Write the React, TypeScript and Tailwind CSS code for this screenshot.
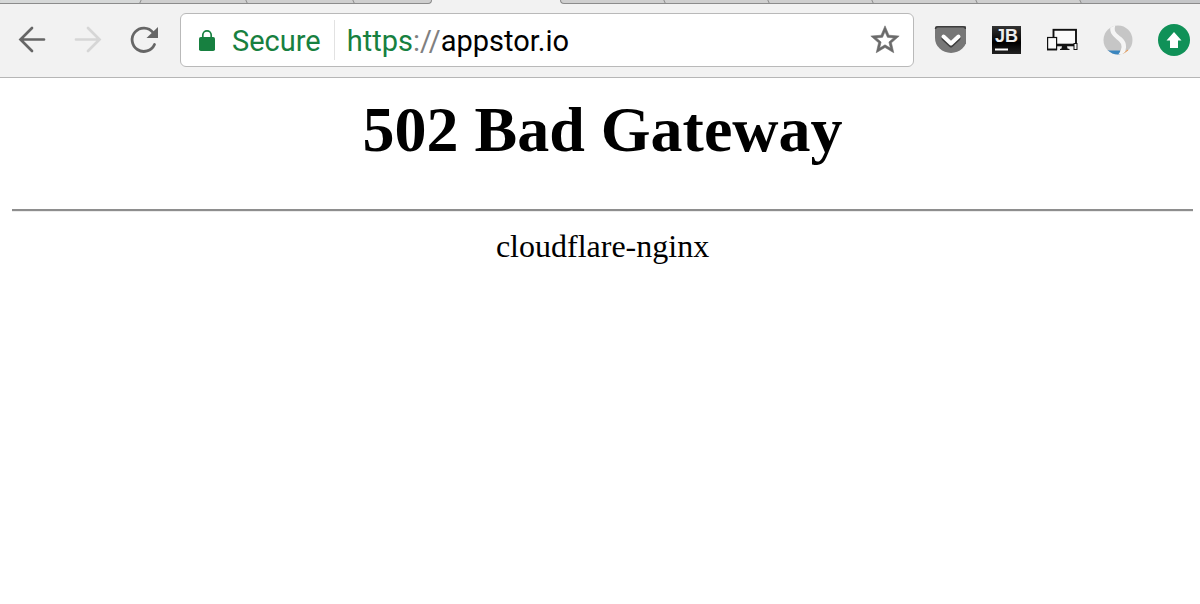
import type { ReactNode } from "react";

function ToolButton({ label, disabled, children }: { label: string; disabled?: boolean; children: ReactNode }) {
  return (
    <button type="button" aria-label={label} disabled={disabled} className="size-8 shrink-0">
      <svg viewBox="0 0 32 32" className="size-8" fill="none">
        {children}
      </svg>
    </button>
  );
}

function TabStrip() {
  return (
    <div className="flex h-1 bg-[#f2f2f2]">
      {/* Tabs left of the active one */}
      <div className="flex w-[36%] overflow-hidden rounded-br-md border-r border-b border-[#8c8c8c] bg-[#cfcfcf]">
        <div className="w-[141px] -skew-x-[24deg] border-r border-[#8c8c8c] bg-[#d6d8d8]" />
        <div className="w-[106px] skew-x-[24deg] border-r border-[#8c8c8c]" />
        <div className="w-[107px] skew-x-[24deg] border-r border-[#8c8c8c]" />
      </div>
      {/* Tabs right of the active one */}
      <div className="ml-32 flex flex-1 overflow-hidden rounded-bl-md border-b border-l border-[#8c8c8c] bg-[#cfcfcf]">
        {Array.from({ length: 5 }).map((_, i) => (
          <div key={i} className="w-[104px] skew-x-[24deg] border-r border-[#8c8c8c]" />
        ))}
        <div className="flex-1 bg-[#c5c6c8]" />
      </div>
    </div>
  );
}

function AddressBar() {
  return (
    <div className="mx-5 flex h-[54px] min-w-0 flex-1 items-center rounded-md border border-[#b9b9b9] bg-white text-[29px] leading-8 text-[#178040]">
      <button type="button" className="flex h-10 items-center border-r border-[#e2e2e2] pr-[13px] pl-[17px]">
        <svg viewBox="0 0 18 22" className="mr-4 h-[22px] w-[18px]" aria-hidden="true">
          <path d="M4.800 9.500V6a4.200 4.200 0 0 1 8.400 0v3.500" fill="none" stroke="#178040" strokeWidth="1.700" />
          <rect x="1" y="8" width="16" height="14" rx="1.800" fill="#178040" />
        </svg>
        <span className="pt-0.5">Secure</span>
      </button>
      <div
        role="textbox"
        aria-label="Address"
        contentEditable
        suppressContentEditableWarning
        spellCheck={false}
        className="ml-3 flex-1 pt-0.5 whitespace-nowrap text-black outline-none"
      >
        <span className="text-[#178040]">https</span>
        <span className="text-[#808080]">://</span>appstor.io
      </div>
      <button type="button" aria-label="Bookmark this page" className="mr-[11px]">
        <svg viewBox="0 0 24 24" className="size-[34px]" fill="#6a6a6a" stroke="#6a6a6a" strokeWidth="0.400">
          <path d="M22 9.240l-7.190-.620L12 2 9.190 8.630 2 9.240l5.460 4.730L5.820 21 12 17.270 18.180 21l-1.630-7.030L22 9.240zM12 15.400l-3.760 2.270 1-4.280-3.320-2.880 4.380-.380L12 6.100l1.710 4.040 4.380.380-3.320 2.880 1 4.280L12 15.400z" />
        </svg>
      </button>
    </div>
  );
}

function Extensions() {
  return (
    <div className="flex items-center gap-6">
      <ToolButton label="Save to Pocket">
        <path d="M3 2h28a2 2 0 0 1 2 2v10a16 15 0 0 1-32 0V4a2 2 0 0 1 2-2z" fill="#777" />
        <path d="M1.500 5c0-1.600.800-2.300 2.500-2.300h25c1.700 0 2.500.700 2.500 2.300" stroke="#3d3d3d" strokeWidth="1.500" />
        <path d="M9.500 14.500l7.500 7 7.500-7" stroke="#3d3d3d" strokeWidth="4" strokeLinecap="round" strokeLinejoin="round" />
        <path d="M9.500 12.500l7.500 7 7.500-7" stroke="#fff" strokeWidth="4" strokeLinecap="round" strokeLinejoin="round" />
      </ToolButton>
      <ToolButton label="JetBrains IDE Support">
        <defs>
          <linearGradient id="jb" x1="0" y1="0" x2="0" y2="1">
            <stop offset="0" stopColor="#333" />
            <stop offset="0.600" stopColor="#000" />
            <stop offset="1" stopColor="#222" />
          </linearGradient>
        </defs>
        <rect x="2" y="2" width="29" height="28" fill="url(#jb)" />
        <text x="16.500" y="17.500" textAnchor="middle" fill="#eee" className="font-['Liberation_Sans',sans-serif] text-[18px] font-bold">
          JB
        </text>
        <path d="M5 25.500h13" stroke="#fff" strokeWidth="2" />
      </ToolButton>
      <ToolButton label="Responsive viewer">
        <rect x="7.500" y="5.800" width="22.500" height="15.200" fill="#fafafa" stroke="#111" strokeWidth="1.900" />
        <path d="M11 21h17" stroke="#111" strokeWidth="2.600" />
        <path d="M16 22h5l.500 2.500 2 .500v1h-9.500v-1l1.500-.500z" fill="#111" />
        <rect x="1.600" y="13.500" width="9" height="12" fill="#fafafa" stroke="#111" strokeWidth="1.200" />
        <path d="M1 25.500h10" stroke="#111" strokeWidth="1.800" />
        <rect x="28" y="19.500" width="3" height="6" fill="#fafafa" stroke="#111" />
      </ToolButton>
      <ToolButton label="SimilarWeb">
        <clipPath id="disc">
          <circle cx="16" cy="16" r="14.500" />
        </clipPath>
        <g clipPath="url(#disc)">
          <path d="M0 0h32v32H0z" fill="#c6c6c6" />
          <path d="M0 26.500h18V32H0z" fill="#3a86bf" />
          <path d="M11.500 0C8 9 14 11.500 18.500 15.500S23 26 18 32" stroke="#f5f5f5" strokeWidth="4.500" />
          <path d="M20.500 30.500l5-5 1.500 1.500-4 4z" fill="#f09a4e" />
        </g>
      </ToolButton>
      <ToolButton label="Update available">
        <circle cx="16" cy="16" r="16" fill="#109158" />
        <path d="M16 8l7.500 8.500H20v7.500h-8v-7.500H8.500z" fill="#fff" />
      </ToolButton>
    </div>
  );
}

export default function App() {
  return (
    <div className="min-h-screen bg-white font-['Roboto',sans-serif]">
      <TabStrip />

      {/* Toolbar */}
      <header className="flex items-center border-b border-[#b6b6b6] bg-[#f2f2f2] pt-[9px] pr-[10px] pb-[10px] pl-4">
        <nav className="flex gap-6">
          <ToolButton label="Back">
            <path d="M28 15.500H5M16 4L4.500 15.500 16 27" stroke="#666" strokeWidth="2.700" strokeLinecap="round" />
          </ToolButton>
          <ToolButton label="Forward" disabled>
            <path d="M4 15.500h23M16 4l11.500 11.500L16 27" stroke="#d6d6d6" strokeWidth="2.700" strokeLinecap="round" />
          </ToolButton>
          <ToolButton label="Reload">
            <path d="M26.500 20.500A11.700 11.700 0 1 1 25 8.500" stroke="#666" strokeWidth="2.800" strokeLinecap="round" />
            <path d="M30 3v11H18.500z" fill="#666" />
          </ToolButton>
        </nav>
        <AddressBar />
        <Extensions />
      </header>

      {/* Error page */}
      <main className="pt-4 pr-[7px] pl-3 text-center font-['Liberation_Serif',serif] text-black">
        <h1 className="text-[64px] leading-[72px] font-bold">502 Bad Gateway</h1>
        <hr className="mt-[43px] mb-4 border-t-2 border-b border-t-[#8e8e8e] border-b-[#ececec]" />
        <p className="text-[32px] leading-9">cloudflare-nginx</p>
      </main>
    </div>
  );
}
